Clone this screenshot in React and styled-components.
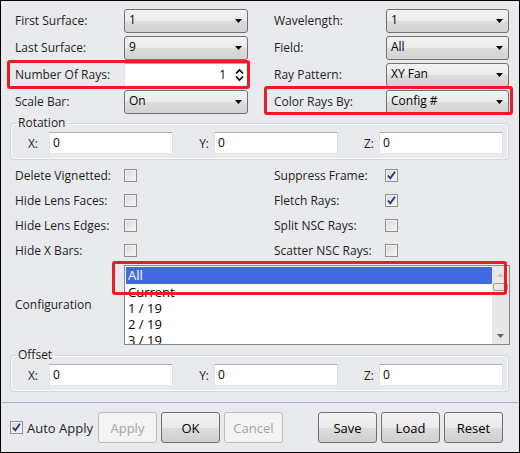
import React from 'react';
import styled, { createGlobalStyle, css } from 'styled-components';

const GlobalStyle = createGlobalStyle`
  html, body {
    margin: 0;
    padding: 0;
    background: #fff;
  }
  body {
    font-family: "Open Sans", "Noto Sans", sans-serif;
    font-size: 12px;
    color: #1e1e1e;
  }
  * {
    box-sizing: border-box;
  }
`;

const Window = styled.div`
  width: 520px;
  height: 453px;
  border: 1px solid #000;
  background: #e9eaed;
  padding-top: 8px;
  display: flex;
  flex-direction: column;
  overflow: hidden;
`;

/* top block: two columns of label + control */
const FieldRows = styled.div`
  display: flex;
  flex-direction: column;
  gap: 3px;
  padding-left: 14px;
`;

const Row = styled.div`
  display: flex;
  height: 24px;
  gap: 26px;
`;

const Field = styled.div`
  position: relative;
  display: flex;
  align-items: center;
  height: 100%;
  ${p => p.$mark && css`
    &::after {
      content: '';
      position: absolute;
      inset: ${p.$mark};
      border: 3px solid #ec1c24;
      border-radius: 3px;
      pointer-events: none;
    }
  `}
`;

const Label = styled.span`
  width: ${p => p.$w}px;
  flex-shrink: 0;
  white-space: nowrap;
  padding-bottom: 1px;
`;

const ComboBox = styled.div`
  width: ${p => p.$w}px;
  height: 100%;
  border: 1px solid #707070;
  border-radius: 3px;
  background: linear-gradient(#f3f3f3 0%, #ebebeb 50%, #dddddd 51%, #d3d3d3 100%);
  display: flex;
  align-items: center;
  justify-content: space-between;
  padding: 0 5px 3px 4px;
  color: #000;
`;

const Arrow = () => (
  <svg width="7" height="4" viewBox="0 0 7 4" style={{ marginTop: 3 }}>
    <path d="M0 0h7L3.5 4z" fill="#000" />
  </svg>
);

const Combo = ({ w = 124, value }) => (
  <ComboBox $w={w}>
    <span>{value}</span>
    <Arrow />
  </ComboBox>
);

const textBoxEdges = css`
  background: #fff;
  border: 1px solid #e3e9ef;
  border-top-color: #abadb3;
  border-left-color: #e2e3ea;
  border-right-color: #dbdfe6;
`;

const SpinBox = styled.div`
  ${textBoxEdges};
  width: 124px;
  height: 100%;
  display: flex;
  align-items: center;
  justify-content: flex-end;
  gap: 9px;
  padding: 0 3px 1px 0;
  color: #000;
`;

const SpinArrows = () => (
  <svg width="9" height="14" viewBox="0 0 9 14">
    <path d="M1 5.5L4.5 2L8 5.5M1 8.5L4.5 12L8 8.5" fill="none" stroke="#000" strokeWidth="1.6" />
  </svg>
);

/* group boxes */
const Group = styled.fieldset`
  margin: ${p => p.$top ?? 1}px 10px 0 9px;
  padding: 1px 5px 5px 0;
  border: 1px solid #d0d7dd;
  border-radius: 4px;
  box-shadow: inset 0 0 0 1px #fbfbfc;
  min-width: 0;
`;

const Legend = styled.legend`
  margin-left: 5px;
  padding: 0 2px;
  line-height: 16px;
`;

const CoordRow = styled.div`
  display: flex;
  align-items: center;
  height: 22px;
`;

const CoordLabel = styled.span`
  width: ${p => p.$w}px;
  text-align: right;
  padding-right: ${p => p.$pad}px;
`;

const TextBox = styled.div`
  ${textBoxEdges};
  width: 124px;
  height: 100%;
  padding: 0 0 1px 3px;
  display: flex;
  align-items: center;
  color: #000;
`;

const Coords = () => (
  <CoordRow>
    <CoordLabel $w={38} $pad={11}>X:</CoordLabel>
    <TextBox>0</TextBox>
    <CoordLabel $w={41} $pad={5}>Y:</CoordLabel>
    <TextBox>0</TextBox>
    <CoordLabel $w={41} $pad={5}>Z:</CoordLabel>
    <TextBox>0</TextBox>
  </CoordRow>
);

/* check boxes */
const ChecksGrid = styled.div`
  display: grid;
  grid-template-columns: 109px 13px 137px 111px 13px;
  grid-auto-rows: 25px;
  align-items: center;
  padding-left: 14px;
  margin-top: 3px;
`;

const Box = styled.span`
  width: 13px;
  height: 13px;
  border: 1px solid #8e8f8f;
  background: linear-gradient(135deg, #d9dadb, #f6f6f6);
  box-shadow: inset 0 0 0 1px #f2f2f2;
  display: inline-flex;
  align-items: center;
  justify-content: center;
  flex-shrink: 0;
`;

const Check = ({ on }) => (
  <Box>
    {on && (
      <svg width="11" height="11" viewBox="0 0 11 11">
        <path d="M2 5.5L4.3 8.3L9 1.8" fill="none" stroke="#2b2e7a" strokeWidth="1.8" />
      </svg>
    )}
  </Box>
);

/* configuration list */
const ConfigRow = styled.div`
  display: flex;
  align-items: center;
  padding-left: 14px;
  margin-top: 2px;
`;

const ListBox = styled.div`
  position: relative;
  width: 386px;
  height: 80px;
  border: 1px solid #828790;
  background: #fff;
  display: flex;
  padding: 1px 0 0 1px;
  &::after {
    content: '';
    position: absolute;
    left: -13px;
    top: -5px;
    width: 389px;
    height: 28px;
    border: 3px solid #ec1c24;
    border-radius: 3px;
  }
`;

const Items = styled.div`
  flex: 1;
  overflow: hidden;
`;

const Item = styled.div`
  height: ${p => (p.$sel ? 17 : 16)}px;
  line-height: ${p => (p.$sel ? 17 : 16)}px;
  padding-left: 2px;
  font-size: 13px;
  white-space: nowrap;
  color: ${p => (p.$sel ? '#fff' : '#000')};
  background: ${p => (p.$sel ? '#4169e1' : 'transparent')};
`;

const ScrollBar = styled.div`
  width: 17px;
  margin-top: -1px;
  background: #e8e8e8;
  display: flex;
  flex-direction: column;
`;

const ScrollButton = styled.div`
  height: 17px;
  display: flex;
  align-items: center;
  justify-content: center;
`;

const Thumb = styled.div`
  height: 8px;
  margin: 0 1px;
  border: 1px solid #9a9a9a;
  border-radius: 2px;
  background: linear-gradient(90deg, #f0f0f0, #dcdcdc);
`;

const Track = styled.div`
  flex: 1;
`;

const ScrollArrow = ({ up, color }) => (
  <svg width="7" height="4" viewBox="0 0 7 4">
    <path d={up ? 'M0 4h7L3.5 0z' : 'M0 0h7L3.5 4z'} fill={color} />
  </svg>
);

/* bottom bar */
const Separator = styled.div`
  margin-top: 10px;
  border-top: 1px solid #a3b1c0;
`;

const Footer = styled.div`
  margin-top: 9px;
  height: 31px;
  display: flex;
  align-items: center;
  padding: 0 16px 0 9px;
`;

const CheckLabel = styled.label`
  display: flex;
  align-items: center;
  gap: 4px;
  font-size: 13px;
  color: #1e1e1e;
  margin-right: 5px;
`;

const Button = styled.div`
  width: 59px;
  height: 31px;
  border-radius: 3px;
  display: flex;
  align-items: center;
  justify-content: center;
  font-size: 13px;
  ${p => p.$disabled
    ? css`
        border: 1px solid #b9bdc0;
        background: #f4f4f4;
        color: #a3a3a3;
      `
    : css`
        border: 1px solid #707070;
        background: linear-gradient(#f3f3f3 0%, #ebebeb 50%, #dddddd 51%, #cfcfcf 100%);
        color: #000;
      `}
`;

const ButtonGroup = styled.div`
  display: flex;
  gap: 4px;
  margin-left: ${p => (p.$push ? 'auto' : '0')};
`;

const rows = [
  [
    { label: 'First Surface:', combo: '1' },
    { label: 'Wavelength:', combo: '1' },
  ],
  [
    { label: 'Last Surface:', combo: '9' },
    { label: 'Field:', combo: 'All' },
  ],
  [
    { label: 'Number Of Rays:', spin: '1', mark: '-3px -2px -2px -8px' },
    { label: 'Ray Pattern:', combo: 'XY Fan' },
  ],
  [
    { label: 'Scale Bar:', combo: 'On' },
    { label: 'Color Rays By:', combo: 'Config #', mark: '-4px -4px -1px -10px' },
  ],
];

const checks = [
  ['Delete Vignetted:', false, 'Suppress Frame:', true],
  ['Hide Lens Faces:', false, 'Fletch Rays:', true],
  ['Hide Lens Edges:', false, 'Split NSC Rays:', false],
  ['Hide X Bars:', false, 'Scatter NSC Rays:', false],
];

const configs = ['All', 'Current', '1 / 19', '2 / 19', '3 / 19'];

export default function App() {
  return (
    <>
      <GlobalStyle />
      <Window>
        <FieldRows>
          {rows.map((row, i) => (
            <Row key={i}>
              {row.map((f, j) => (
                <Field key={f.label} $mark={f.mark}>
                  <Label $w={j === 0 ? 109 : 112}>{f.label}</Label>
                  {f.spin ? (
                    <SpinBox>
                      <span>{f.spin}</span>
                      <SpinArrows />
                    </SpinBox>
                  ) : (
                    <Combo w={j === 0 ? 124 : 123} value={f.combo} />
                  )}
                </Field>
              ))}
            </Row>
          ))}
        </FieldRows>

        <Group>
          <Legend>Rotation</Legend>
          <Coords />
        </Group>

        <ChecksGrid>
          {checks.map(([a, aOn, b, bOn]) => (
            <React.Fragment key={a}>
              <span>{a}</span>
              <Check on={aOn} />
              <span />
              <span>{b}</span>
              <Check on={bOn} />
            </React.Fragment>
          ))}
        </ChecksGrid>

        <ConfigRow>
          <Label $w={109}>Configuration</Label>
          <ListBox>
            <Items>
              {configs.map((c, i) => (
                <Item key={c} $sel={i === 0}>{c}</Item>
              ))}
            </Items>
            <ScrollBar>
              <ScrollButton>
                <ScrollArrow up color="#c4c4c4" />
              </ScrollButton>
              <Thumb />
              <Track />
              <ScrollButton>
                <ScrollArrow color="#606060" />
              </ScrollButton>
            </ScrollBar>
          </ListBox>
        </ConfigRow>

        <Group $top={2}>
          <Legend>Offset</Legend>
          <Coords />
        </Group>

        <Separator />

        <Footer>
          <CheckLabel>
            <Check on />
            Auto Apply
          </CheckLabel>
          <ButtonGroup>
            <Button $disabled>Apply</Button>
            <Button>OK</Button>
            <Button $disabled>Cancel</Button>
          </ButtonGroup>
          <ButtonGroup $push>
            <Button>Save</Button>
            <Button>Load</Button>
            <Button>Reset</Button>
          </ButtonGroup>
        </Footer>
      </Window>
    </>
  );
}
